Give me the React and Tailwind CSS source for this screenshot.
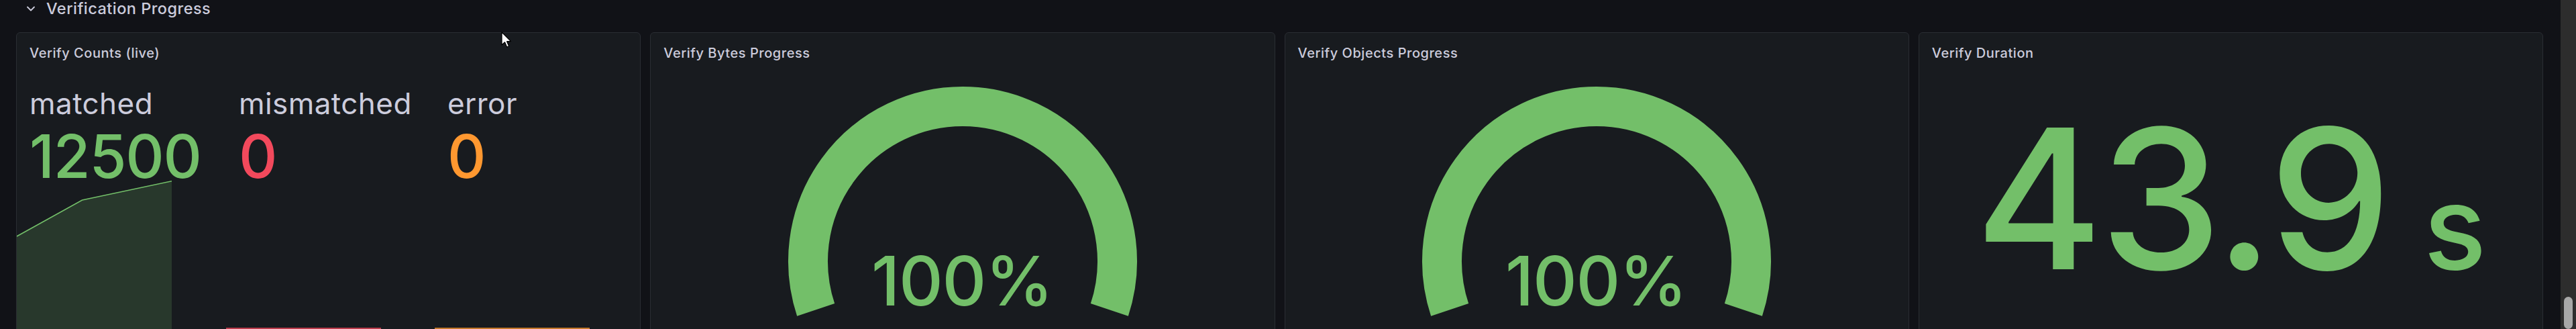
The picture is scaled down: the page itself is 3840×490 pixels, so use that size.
import React from "react";

const GREEN = "#73bf69";

function Sparkline({ color, points, fill }) {
  const w = 231;
  const h = 222;
  const d = points.map((p, i) => `${i === 0 ? "M" : "L"}${p[0]},${p[1]}`).join(" ");
  const area = `${d} L${points[points.length - 1][0]},${h} L${points[0][0]},${h} Z`;
  return (
    <svg width={w} height={h} viewBox={`0 0 ${w} ${h}`} className="block -mt-[8px]">
      {fill && <path d={area} fill={color} fillOpacity="0.18" />}
      <path d={d} fill="none" stroke={color} strokeWidth="1.6" />
    </svg>
  );
}

function StatItem({ label, value, color, points, fill }) {
  return (
    <div className="flex flex-col min-w-0">
      <div className="pl-[19px] text-[44px] leading-[44px] tracking-[0.01em] text-[#ccccdc] whitespace-nowrap">{label}</div>
      <div className="pl-[19px] mt-[12px] text-[89px] leading-[89px] font-medium tracking-[-0.013em] whitespace-nowrap" style={{ color }}>
        {value}
      </div>
      <Sparkline color={color} points={points} fill={fill} />
    </div>
  );
}

function PanelTitle({ children }) {
  return (
    <div className="pt-[18px] pl-[19px] text-[20px] leading-[24px] font-medium tracking-[0.027em] text-[#ccccdc] whitespace-nowrap">
      {children}
    </div>
  );
}

function Panel({ children }) {
  return (
    <div className="h-[470px] rounded-[6px] border border-[#2a2d33] bg-[#181b1f] overflow-hidden flex flex-col">
      {children}
    </div>
  );
}

function Gauge({ title }) {
  const cx = 270;
  const cy = 298;
  const r = 230.5;
  const a = (18.3 * Math.PI) / 180;
  const x1 = cx - r * Math.cos(a);
  const y1 = cy + r * Math.sin(a);
  const x2 = cx + r * Math.cos(a);
  const y2 = cy + r * Math.sin(a);
  return (
    <Panel>
      <PanelTitle>{title}</PanelTitle>
      <svg width="540" height="380" viewBox="0 0 540 380" className="block mx-auto">
        <path
          d={`M${x1},${y1} A${r},${r} 0 1 1 ${x2},${y2}`}
          fill="none"
          stroke={GREEN}
          strokeWidth="59"
          strokeLinecap="butt"
        />
        <text
          x={cx - 1}
          y="364"
          textAnchor="middle"
          fill={GREEN}
          fontFamily="Inter, sans-serif"
          fontSize="102"
          fontWeight="500"
          letterSpacing="-1.3"
        >
          100%
        </text>
      </svg>
    </Panel>
  );
}

export default function App() {
  return (
    <div className="relative w-[3840px] h-[490px] overflow-hidden bg-[#111217] flex font-['Inter',sans-serif]">
      <div className="flex-1 min-w-0 flex flex-col pl-[24px] pr-[26px]">
        <div className="h-[25px] flex items-center pl-[16px] gap-[17px]">
          <svg width="12" height="8" viewBox="0 0 12 8" className="block">
            <polyline points="1,1.5 6,6.5 11,1.5" fill="none" stroke="#ccccdc" strokeWidth="1.8" strokeLinecap="round" strokeLinejoin="round" />
          </svg>
          <span className="text-[23.5px] leading-[25px] font-medium tracking-[0.02em] text-[#ccccdc] whitespace-nowrap">Verification Progress</span>
        </div>
        <div className="mt-[23px] grid grid-cols-4 gap-[14px]">
          <Panel>
            <PanelTitle>Verify Counts (live)</PanelTitle>
            <div className="mt-[41px] grid grid-cols-[312px_311px_1fr]">
              <StatItem label="matched" value="12500" color={GREEN} fill points={[[0, 83], [97.5, 29], [231, 0.8]]} />
              <StatItem label="mismatched" value="0" color="#f2495c" points={[[0, 220], [231, 220]]} />
              <StatItem label="error" value="0" color="#ff9830" points={[[0, 220], [231, 220]]} />
            </div>
          </Panel>
          <Gauge title="Verify Bytes Progress" />
          <Gauge title="Verify Objects Progress" />
          <Panel>
            <PanelTitle>Verify Duration</PanelTitle>
            <div className="mt-[60px] flex items-baseline justify-center text-[#73bf69] font-medium">
              <span className="text-[290px] leading-[290px] tracking-[-0.015em]">43.9</span>
              <span className="ml-[52px] text-[174px] leading-[174px]">s</span>
            </div>
          </Panel>
        </div>
      </div>
      <div className="w-[23px] shrink-0 bg-[#2d2d2d] flex flex-col items-center pt-[442px]">
        <div className="w-[13px] h-[60px] rounded-full bg-[#a8a8a8]" />
      </div>
      <svg width="16" height="26" viewBox="0 0 16 26" className="absolute left-[747px] top-[47px]">
        <path d="M1,1 L1,20 L5.5,15.8 L8.6,23 L11.6,21.7 L8.6,14.7 L14.5,14.7 Z" fill="#ffffff" stroke="#000000" strokeWidth="1.2" strokeLinejoin="round" />
      </svg>
    </div>
  );
}
